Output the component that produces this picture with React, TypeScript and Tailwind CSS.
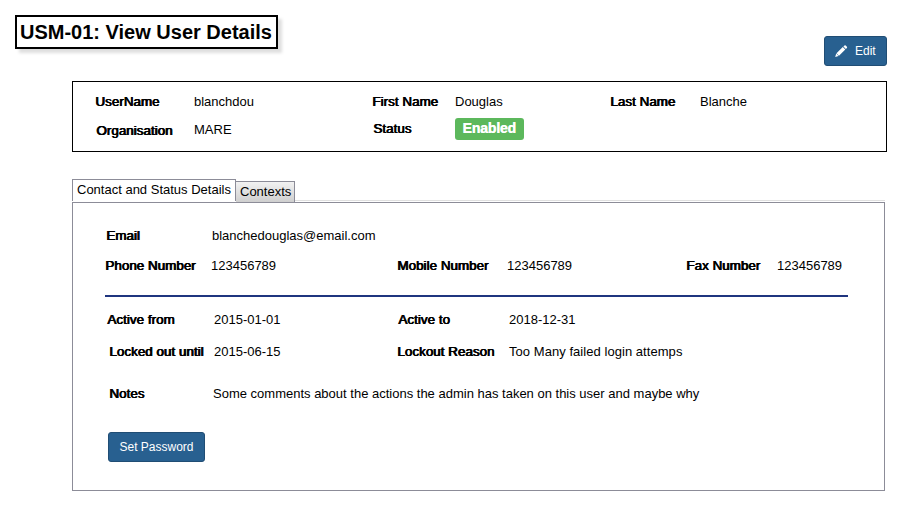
import type { ReactNode } from "react";

// Double-struck regular face: each glyph is drawn again one pixel to the right.
function Label({ className, children }: { className: string; children: ReactNode }) {
  return (
    <span className={`shrink-0 whitespace-nowrap text-[13.33px] tracking-[0.06px] [text-shadow:0.5px_0_0_black,0.9px_0_0_black] ${className}`}>
      {children}
    </span>
  );
}

function Value({ className = "", children }: { className?: string; children: ReactNode }) {
  return <span className={`shrink-0 whitespace-nowrap ${className}`}>{children}</span>;
}

function Summary() {
  return (
    <section className="mt-[15px] ml-[72px] h-[71px] w-[815px] border border-black pt-3">
      <div className="flex h-4 pl-[22px]">
        <Label className="w-[99px]">UserName</Label>
        <Value className="w-[178px]">blanchdou</Value>
        <Label className="w-[83px]">First Name</Label>
        <Value className="w-[155px]">Douglas</Value>
        <Label className="w-[90px]">Last Name</Label>
        <Value>Blanche</Value>
      </div>
      <div className="mt-2 flex h-[22px] items-start pl-[23px]">
        <Label className="w-[98px] pt-[5px]">Organisation</Label>
        <Value className="w-[179px] pt-1">MARE</Value>
        <Label className="w-[82px] pt-[3px]">Status</Label>
        <span className="h-[22px] w-[69px] rounded-[3px] bg-[#5cb85c] pl-[7.5px] text-[14px] leading-[21px] font-bold tracking-[-0.15px] text-white [text-shadow:0.3px_0_0_white]">
          Enabled
        </span>
      </div>
    </section>
  );
}

function Tabs() {
  return (
    <div className="mt-[27px] ml-[72px] flex h-[23px] w-[813px] items-start">
      <div className="h-[22px] w-[164px] border border-b-0 border-[#8c8c98] pt-[2px] pl-1 whitespace-nowrap">
        Contact and Status Details
      </div>
      <div className="mt-[2px] h-[21px] w-[59px] border border-l-0 border-b-0 border-[#8c8c98] bg-linear-to-b from-[#f2f2f2] to-[#cfcfcf] pt-[2px] pl-1 whitespace-nowrap">
        Contexts
      </div>
      <div className="mt-[21px] h-px flex-1 bg-[#e0e0e0]" />
    </div>
  );
}

function DetailsPanel() {
  return (
    <section className="ml-[72px] h-[289px] w-[813px] border border-[#8c8c98] pt-[25px]">
      <div className="flex h-4 pl-[33px]">
        <Label className="w-[106px]">Email</Label>
        <Value>blanchedouglas@email.com</Value>
      </div>
      <div className="mt-[14px] flex h-4 pl-8">
        <Label className="w-[106px]">Phone Number</Label>
        <Value className="w-[186px]">123456789</Value>
        <Label className="w-[110px]">Mobile Number</Label>
        <Value className="w-[179px]">123456789</Value>
        <Label className="w-[91px]">Fax Number</Label>
        <Value>123456789</Value>
      </div>
      <div className="mt-[21px] ml-8 h-[2px] w-[743px] bg-[#1f357f]" />
      <div className="mt-[15px] flex h-4 pl-[34px]">
        <Label className="w-[107px]">Active from</Label>
        <Value className="w-[184px]">2015-01-01</Value>
        <Label className="w-[111px]">Active to</Label>
        <Value>2018-12-31</Value>
      </div>
      <div className="mt-4 flex h-4 pl-9">
        <Label className="w-[105px]">Locked out until</Label>
        <Value className="w-[183px]">2015-06-15</Value>
        <Label className="w-[112px]">Lockout Reason</Label>
        <Value className="tracking-[0.05px]">Too Many failed login attemps</Value>
      </div>
      <div className="mt-[26px] flex h-4 pl-9">
        <Label className="w-[104px]">Notes</Label>
        <Value>Some comments about the actions the admin has taken on this user and maybe why</Value>
      </div>
      <button className="mt-[30px] ml-[35px] flex h-[30px] w-[97px] items-center justify-center rounded-[3px] border border-[#204d74] bg-[#286090] text-[12px] text-white">
        Set Password
      </button>
    </section>
  );
}

export default function App() {
  return (
    <main className="h-[507px] w-[902px] overflow-hidden bg-white font-['Liberation_Sans',Arial,sans-serif] text-[13px] leading-4 text-black">
      <header className="flex items-start justify-between pt-[15px] pr-[15px] pl-[15px]">
        <h1 className="h-[34px] w-[263px] border-2 border-black bg-white pl-[3px] text-[20px] leading-[31px] font-bold whitespace-nowrap shadow-[4px_4px_3px_rgba(0,0,0,0.13)]">
          USM-01: View User Details
        </h1>
        <button className="mt-[21px] flex h-[30px] w-[63px] items-center rounded-[3px] border border-[#204d74] bg-[#286090] pl-[10px] text-[12px] text-white">
          <svg className="mr-[7px] h-[13px] w-[13px]" viewBox="0 0 13 13" fill="white">
            <path d="M0.2 12 L1.2 8.6 L3.6 11 Z M1.5 8.3 L7.8 2 L10.3 4.5 L4 10.8 Z M8.4 1.5 L9.5 0.4 Q10.1 0 10.7 0.5 L11.9 1.7 Q12.4 2.3 11.9 2.9 L10.9 3.9 Z" />
          </svg>
          Edit
        </button>
      </header>
      <Summary />
      <Tabs />
      <DetailsPanel />
    </main>
  );
}
